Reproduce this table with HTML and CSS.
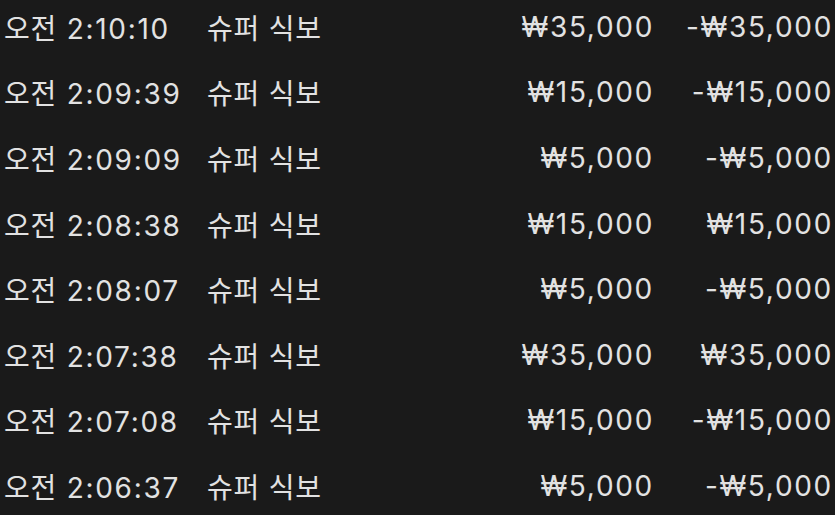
FILE: index.html
```html
<!DOCTYPE html>
<html lang="ko">
<head>
<meta charset="utf-8">
<link rel="stylesheet" href="styles.css">
</head>
<body>
<div class="list">
  <div class="row"><span class="time"><span class="ko">오전</span> 2:10:10</span><span class="name ko">슈퍼 식보</span><span class="amt">₩35,000</span><span class="bal">-₩35,000</span></div>
  <div class="row"><span class="time"><span class="ko">오전</span> 2:09:39</span><span class="name ko">슈퍼 식보</span><span class="amt">₩15,000</span><span class="bal">-₩15,000</span></div>
  <div class="row"><span class="time"><span class="ko">오전</span> 2:09:09</span><span class="name ko">슈퍼 식보</span><span class="amt">₩5,000</span><span class="bal">-₩5,000</span></div>
  <div class="row"><span class="time"><span class="ko">오전</span> 2:08:38</span><span class="name ko">슈퍼 식보</span><span class="amt">₩15,000</span><span class="bal">₩15,000</span></div>
  <div class="row"><span class="time"><span class="ko">오전</span> 2:08:07</span><span class="name ko">슈퍼 식보</span><span class="amt">₩5,000</span><span class="bal">-₩5,000</span></div>
  <div class="row"><span class="time"><span class="ko">오전</span> 2:07:38</span><span class="name ko">슈퍼 식보</span><span class="amt">₩35,000</span><span class="bal">₩35,000</span></div>
  <div class="row"><span class="time"><span class="ko">오전</span> 2:07:08</span><span class="name ko">슈퍼 식보</span><span class="amt">₩15,000</span><span class="bal">-₩15,000</span></div>
  <div class="row"><span class="time"><span class="ko">오전</span> 2:06:37</span><span class="name ko">슈퍼 식보</span><span class="amt">₩5,000</span><span class="bal">-₩5,000</span></div>
</div>
</body>
</html>
```
FILE: styles.css
```css
html, body {
  margin: 0;
  padding: 0;
  background: #1a1a1a;
  overflow: hidden;
}
.list {
  margin-top: -6px;
  padding: 0 2px 0 4px;
  font-family: Inter, "Noto Sans CJK KR", sans-serif;
  font-size: 28px;
  letter-spacing: 1.7px;
  color: #e2e2e2;
}
.ko {
  letter-spacing: 0.8px;
}
.row {
  display: grid;
  grid-template-columns: 203px 1fr 200px 179px;
  height: 65.6px;
  align-items: center;
  white-space: nowrap;
}
.amt, .bal {
  text-align: right;
}
```
